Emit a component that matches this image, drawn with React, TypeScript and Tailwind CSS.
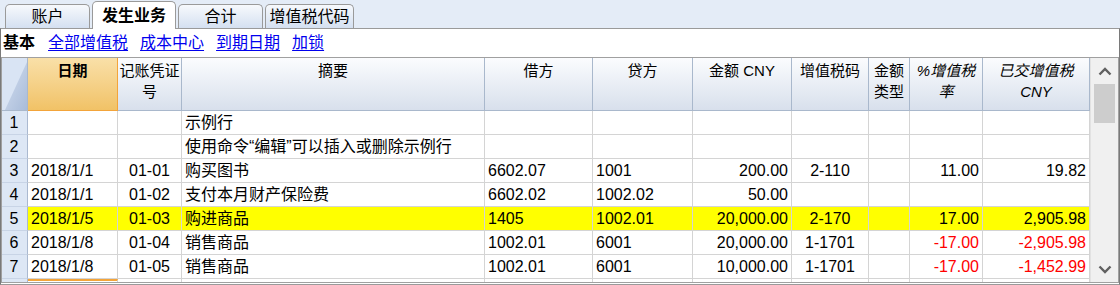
import React from 'react';

type Align = 'l' | 'c' | 'r';

interface Column {
    title: React.ReactNode;
    width: string;
    align: Align;
    italic?: boolean;
}

const columns: Column[] = [
    { title: '日期', width: 'w-[90px]', align: 'l' },
    { title: <>记账凭证<br />号</>, width: 'w-[64px]', align: 'c' },
    { title: '摘要', width: 'w-[303px]', align: 'l' },
    { title: '借方', width: 'w-[108px]', align: 'l' },
    { title: '贷方', width: 'w-[100px]', align: 'l' },
    { title: '金额 CNY', width: 'w-[99px]', align: 'r' },
    { title: '增值税码', width: 'w-[77px]', align: 'c' },
    { title: <>金额<br />类型</>, width: 'w-[41px]', align: 'c' },
    { title: <>%增值税<br />率</>, width: 'w-[73px]', align: 'r', italic: true },
    { title: <>已交增值税<br />CNY</>, width: 'w-[107px]', align: 'r', italic: true },
];

interface Row {
    cells: string[];
    highlight?: boolean;
    negative?: boolean;
}

const rows: Row[] = [
    { cells: ['', '', '示例行', '', '', '', '', '', '', ''] },
    { cells: ['', '', '使用命令“编辑”可以插入或删除示例行', '', '', '', '', '', '', ''] },
    { cells: ['2018/1/1', '01-01', '购买图书', '6602.07', '1001', '200.00', '2-110', '', '11.00', '19.82'] },
    { cells: ['2018/1/1', '01-02', '支付本月财产保险费', '6602.02', '1002.02', '50.00', '', '', '', ''] },
    { cells: ['2018/1/5', '01-03', '购进商品', '1405', '1002.01', '20,000.00', '2-170', '', '17.00', '2,905.98'], highlight: true },
    { cells: ['2018/1/8', '01-04', '销售商品', '1002.01', '6001', '20,000.00', '1-1701', '', '-17.00', '-2,905.98'], negative: true },
    { cells: ['2018/1/8', '01-05', '销售商品', '1002.01', '6001', '10,000.00', '1-1701', '', '-17.00', '-1,452.99'], negative: true },
];

const alignClass: Record<Align, string> = {
    l: 'justify-start pl-[3px]',
    c: 'justify-center',
    r: 'justify-end pr-[3px]',
};

const tabs = ['账户', '发生业务', '合计', '增值税代码'];
const links = ['全部增值税', '成本中心', '到期日期', '加锁'];

function Chevron({ down }: { down?: boolean }) {
    return (
        <svg width="14" height="9" viewBox="0 0 14 9" className={down ? 'rotate-180' : ''}>
            <path d="M1.5 7.5 L7 2 L12.5 7.5" fill="none" stroke="#606060" strokeWidth="2.4" />
        </svg>
    );
}

export default function App() {
    return (
        <div className="flex h-[285px] w-[1120px] flex-col overflow-hidden bg-[#e4ecf7] font-['Liberation_Sans','Noto_Sans_CJK_SC',sans-serif] text-black">
            {/* tab strip */}
            <div className="flex h-[28px] shrink-0 items-end gap-[2px] pl-[5px]">
                {tabs.map((tab, i) =>
                    i === 1 ? (
                        <div
                            key={tab}
                            className="relative z-10 -mb-px flex h-[28px] w-[84px] items-center justify-center rounded-t-[5px] border border-b-0 border-[#9a9a9a] bg-white text-[16px] font-bold"
                        >
                            {tab}
                        </div>
                    ) : (
                        <div
                            key={tab}
                            className={`flex h-[24px] items-center justify-center rounded-t-[5px] border border-b-0 border-[#9a9a9a] bg-linear-to-b from-[#f7f9fc] to-[#d4e0f1] text-[16px] ${i === 3 ? 'w-[89px]' : 'w-[85px]'}`}
                        >
                            {tab}
                        </div>
                    )
                )}
            </div>

            {/* content */}
            <div className="flex h-[257px] flex-col border-x border-t border-b border-x-[#7a7a7a] border-t-[#9a9a9a] border-b-[#9a9a9a] bg-white">
                <div className="flex h-[28px] shrink-0 items-center gap-[12px] pl-[2px] text-[16px] leading-none">
                    <span className="mr-px font-bold">基本</span>
                    {links.map((l) => (
                        <span key={l} className="text-[#0000ee] underline underline-offset-2">
                            {l}
                        </span>
                    ))}
                </div>

                <div className="flex h-[226px] border border-[#a0a0a0]">
                    <div className="w-[1088px] overflow-hidden">
                        {/* header */}
                        <div className="flex h-[53px]">
                            <div className="relative w-[26px] border-r border-b border-[#a9b8cc] bg-[#d9e4f4]">
                                <svg className="absolute right-0 bottom-0" width="22" height="48" viewBox="0 0 22 48">
                                    <defs>
                                        <linearGradient id="corner" x1="0" y1="0" x2="1" y2="1">
                                            <stop offset="0" stopColor="#d3def0" />
                                            <stop offset="1" stopColor="#a9bcd9" />
                                        </linearGradient>
                                    </defs>
                                    <polygon points="22,0 22,48 0,48" fill="url(#corner)" />
                                </svg>
                            </div>
                            {columns.map((c, i) => (
                                <div
                                    key={i}
                                    className={`${c.width} flex justify-center pt-[2px] text-center text-[15px] leading-[21px] ${c.italic ? 'italic' : ''} ${
                                        i === 0
                                            ? 'border-r border-b border-[#f3a43a] bg-linear-to-b from-[#f9e0a8] to-[#f1c266] font-bold'
                                            : 'border-r border-b border-[#a9b8cc] bg-linear-to-b from-[#fbfcfe] to-[#d8e0ec]'
                                    }`}
                                >
                                    <span>{c.title}</span>
                                </div>
                            ))}
                        </div>

                        {/* rows */}
                        {rows.map((r, ri) => (
                            <div key={ri} className="flex h-[24px] text-[16px] leading-none">
                                <div className="flex w-[26px] items-center justify-center border-r border-b border-r-[#aab9d0] border-b-[#c8d4e6] bg-[#dde7f5] pr-px">
                                    {ri + 1}
                                </div>
                                {columns.map((c, ci) => (
                                    <div
                                        key={ci}
                                        className={`${c.width} flex items-center overflow-hidden whitespace-nowrap border-r border-b border-[#d4d4d4] ${alignClass[c.align]} ${
                                            r.highlight ? 'bg-[#ffff00]' : ''
                                        } ${r.negative && ci >= 8 ? 'text-[#ff0000]' : ''}`}
                                    >
                                        {r.cells[ci]}
                                    </div>
                                ))}
                            </div>
                        ))}

                        {/* partially visible row */}
                        <div className="flex h-[24px]">
                            <div className="w-[26px] border-r border-[#aab9d0] bg-[#dde7f5]" />
                            {columns.map((c, ci) => (
                                <div
                                    key={ci}
                                    className={`${c.width} border-r border-[#d4d4d4] ${ci === 0 ? 'border-t-2 border-t-[#f3a43a]' : ''}`}
                                />
                            ))}
                        </div>
                    </div>

                    {/* scrollbar */}
                    <div className="flex flex-1 flex-col items-center border-l border-[#e2e2e2] bg-[#f0f0f0]">
                        <div className="flex h-[26px] items-center justify-center">
                            <Chevron />
                        </div>
                        <div className="h-[39px] w-[21px] bg-[#cdcdcd]" />
                        <div className="flex-1" />
                        <div className="flex h-[26px] items-center justify-center">
                            <Chevron down />
                        </div>
                    </div>
                </div>
            </div>
        </div>
    );
}
